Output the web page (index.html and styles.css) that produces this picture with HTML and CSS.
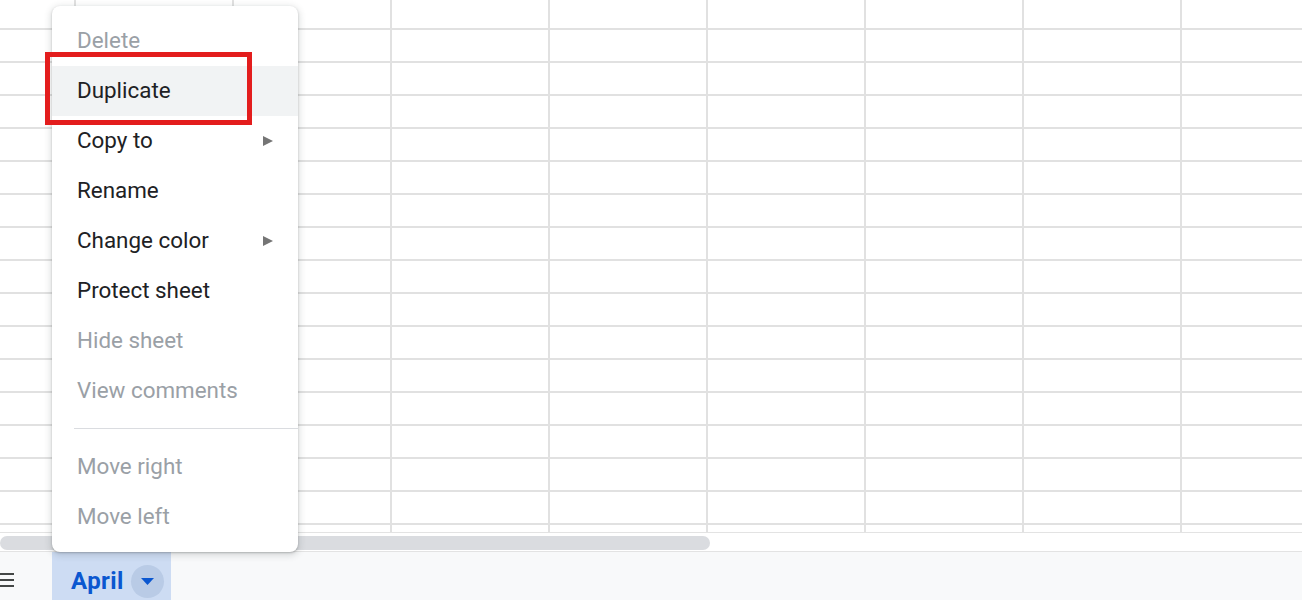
FILE: index.html
```html
<!DOCTYPE html>
<html lang="en">
<head>
  <meta charset="UTF-8">
  <title>Sheet tab menu</title>
  <meta name="viewport" content="width=device-width, initial-scale=1.0">
  <link rel="stylesheet" href="styles.css">
</head>
<body>
  <div class="sheet">
    <div class="grid"></div>
    <div class="hscroll"><div class="thumb"></div></div>
    <div class="tabbar">
      <svg class="all-sheets" width="16" height="14" viewBox="0 0 16 14">
        <rect x="0" y="0" width="16" height="2" fill="#444746"/>
        <rect x="0" y="6" width="16" height="2" fill="#444746"/>
        <rect x="0" y="12" width="16" height="2" fill="#444746"/>
      </svg>
      <div class="tab">
        <span class="tab-name">April</span>
        <span class="tab-drop">
          <svg width="13" height="7" viewBox="0 0 13 7"><path d="M0 0h13L6.5 7z" fill="#0b57d0"/></svg>
        </span>
      </div>
    </div>

    <!-- context menu over the grid -->
    <ul class="menu">
      <li class="item disabled">Delete</li>
      <li class="item hover">Duplicate</li>
      <li class="item sub">Copy to <span class="arrow"></span></li>
      <li class="item">Rename</li>
      <li class="item sub">Change color <span class="arrow"></span></li>
      <li class="item">Protect sheet</li>
      <li class="item disabled">Hide sheet</li>
      <li class="item disabled">View comments</li>
      <li class="sep"></li>
      <li class="item disabled">Move right</li>
      <li class="item disabled">Move left</li>
    </ul>
    <div class="callout"></div>
  </div>
</body>
</html>
```

FILE: styles.css
```css
body { margin: 0; font-family: Roboto, "Liberation Sans", Arial, sans-serif; background: #fff; overflow: hidden; }
.sheet { position: relative; width: 1302px; height: 600px; }

.grid {
  height: 532px;
  background-color: #fff;
  background-image:
    repeating-linear-gradient(to bottom, transparent 0 28px, #e1e1e1 28px 30px, transparent 30px 33px),
    repeating-linear-gradient(to right, transparent 0 74px, #e1e1e1 74px 76px, transparent 76px 158px);
}
.hscroll { border-top: 1px solid #e3e3e3; box-sizing: border-box; height: 19px; padding-top: 3px; }
.thumb { width: 710px; height: 14px; background: #dadce0; border-radius: 7px; }

.tabbar {
  display: flex; align-items: center;
  height: 49px; box-sizing: border-box;
  border-top: 1px solid #e3e3e3; background: #f8f9fa;
}
.all-sheets { margin-left: -2px; margin-top: 8px; }
.tab {
  display: flex; align-items: center; gap: 7px;
  margin-left: 38px; height: 48px; box-sizing: border-box;
  padding: 10px 7px 0 19px; background: #cddcf3;
}
.tab-name { color: #0b57d0; font-weight: bold; font-size: 24px; letter-spacing: 0.4px; }
.tab-drop {
  display: flex; align-items: center; justify-content: center;
  width: 33px; height: 33px; border-radius: 50%; background: #b9cbe6;
}

.menu {
  position: absolute; left: 52px; top: 6px; width: 246px;
  margin: 0; padding: 10px 0; list-style: none;
  background: #fff; border-radius: 8px;
  box-shadow: 0 2px 6px 2px rgba(60, 64, 67, .15), 0 1px 2px rgba(60, 64, 67, .3);
}
.item {
  display: flex; align-items: center; justify-content: space-between;
  height: 50px; box-sizing: border-box; padding: 0 25px 2px;
  font-size: 22.4px; color: #202124;
}
.item.disabled { color: #9aa0a6; }
.item.hover { background: #f1f3f4; }
.arrow {
  width: 0; height: 0; margin-top: 2px;
  border-top: 5.5px solid transparent; border-bottom: 5.5px solid transparent;
  border-left: 10px solid #757575;
}
.sep { height: 1px; background: #dadce0; margin: 12px 0 13px 22px; }

.callout {
  position: absolute; left: 45px; top: 52px; width: 207px; height: 73px;
  box-sizing: border-box; border: 5px solid #e31d1d;
}
```
